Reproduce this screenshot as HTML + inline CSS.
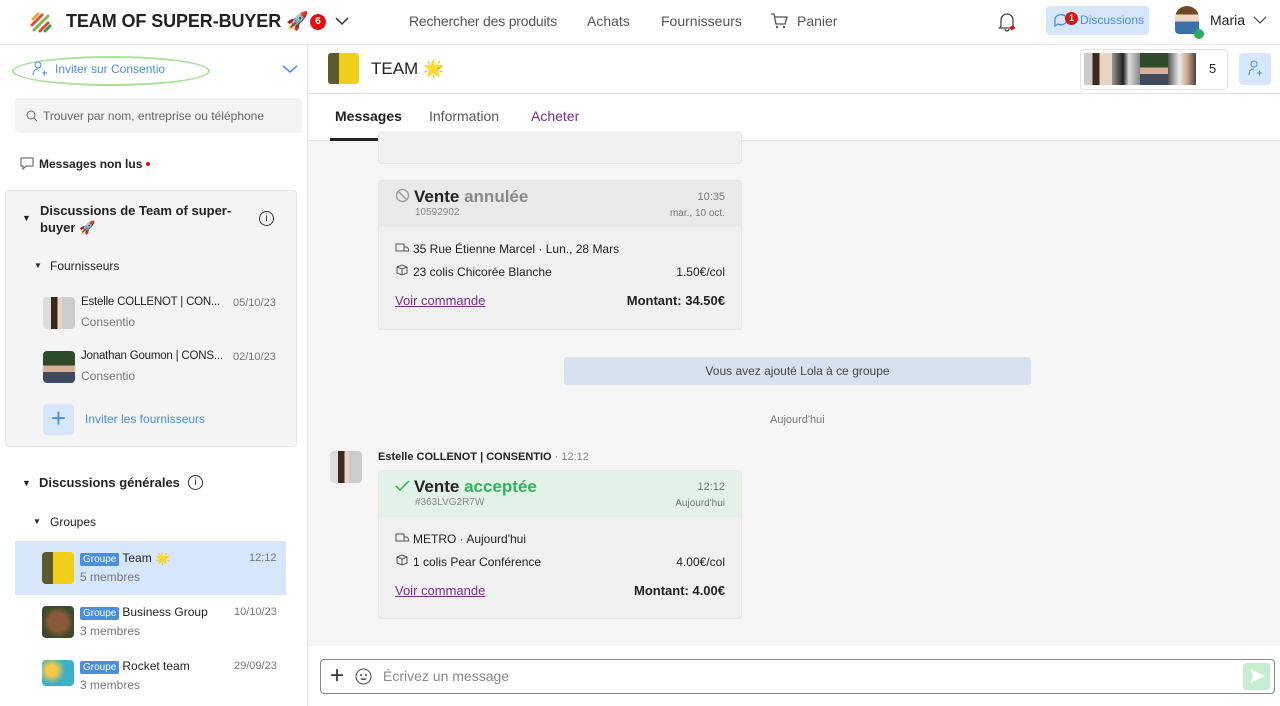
<!DOCTYPE html>
<html><head><meta charset="utf-8"><style>
*{box-sizing:border-box;margin:0;padding:0}
body{width:1280px;height:706px;overflow:hidden;font-family:"Liberation Sans","Noto Sans CJK JP",sans-serif;background:#fff;color:#222;position:relative;font-size:13px}
.a{position:absolute}
.nav{left:0;top:0;width:1280px;height:45px;border-bottom:1px solid #e4e4e4;background:#fff}
.side{left:0;top:45px;width:308px;height:661px;border-right:1px solid #e4e4e4;background:#fff}
.chat{left:308px;top:141px;width:972px;height:505px;background:#f5f5f5}
.card{background:#f0f0f0;border:1px solid #e6e6e6;border-radius:4px;width:364px}
.ch{height:46px;background:#eaeaea;padding:6px 16px 0 16px;position:relative}
.cb{padding:10px 16px;font-size:12px}
.row{display:flex;justify-content:space-between;height:23px;align-items:center}
.link{color:#7b2d8e;text-decoration:underline;font-size:13px}
.av{width:32px;height:32px;border-radius:4px}
.tag{background:#4a8ee0;color:#fff;font-size:10px;padding:1px 3px;border-radius:2px;margin-right:3px}
.g{color:#777}
.nm{font-size:11.5px;letter-spacing:-.2px}
</style></head><body>
<div class="a nav">
 <svg class="a" style="left:28px;top:9px" width="26" height="26" viewBox="0 0 26 26"><g stroke-width="3" stroke-linecap="round"><path d="M5 10l5-5" stroke="#e8a33a"/><path d="M4 16l10-10" stroke="#d94b3a"/><path d="M6 21l14-14" stroke="#7db944"/><path d="M12 22l8-8" stroke="#d94b3a"/><path d="M17 22l5-5" stroke="#2f9e44"/></g></svg>
 <div class="a" style="left:66px;top:11px;font-size:18px;font-weight:bold;letter-spacing:-.1px">TEAM OF SUPER-BUYER 🚀</div>
 <div class="a" style="left:310px;top:14px;width:16px;height:16px;border-radius:8px;background:#d11;color:#fff;font-size:10px;text-align:center;line-height:16px;font-weight:bold">6</div>
 <svg class="a" style="left:334px;top:15px" width="16" height="12"><path d="M2 3l6 6 6-6" stroke="#333" fill="none" stroke-width="1.5"/></svg>
 <div class="a" style="left:409px;top:13px;font-size:14px;color:#555;letter-spacing:-.2px">Rechercher des produits</div>
 <div class="a" style="left:587px;top:13px;font-size:14px;color:#555">Achats</div>
 <div class="a" style="left:661px;top:13px;font-size:14px;color:#555">Fournisseurs</div>
 <svg class="a" style="left:770px;top:12px" width="18" height="18" viewBox="0 0 18 18"><path d="M1 2h3l2 10h9l2-7H5" stroke="#555" fill="none" stroke-width="1.3"/><circle cx="7" cy="15" r="1.2" fill="#555"/><circle cx="14" cy="15" r="1.2" fill="#555"/></svg>
 <div class="a" style="left:797px;top:13px;font-size:14px;color:#555">Panier</div>
 <svg class="a" style="left:998px;top:12px" width="18" height="20" viewBox="0 0 18 20"><path d="M3 14V8a6 6 0 0112 0v6l1.5 2h-15z M7 17a2 2 0 004 0" stroke="#444" fill="none" stroke-width="1.3"/><circle cx="14" cy="16" r="2" fill="#d11"/></svg>
 <div class="a" style="left:1046px;top:6px;width:103px;height:29px;background:#d6e6fb;border-radius:4px"></div>
 <svg class="a" style="left:1052px;top:11px" width="22" height="20"><path d="M3 9a6 5 0 1 1 3 4l-3 2z" stroke="#4a8ee0" fill="none" stroke-width="1.3"/></svg>
 <div class="a" style="left:1065px;top:12px;width:13px;height:13px;border-radius:7px;background:#d11;color:#fff;font-size:9px;text-align:center;line-height:13px;font-weight:bold">1</div>
 <div class="a" style="left:1080px;top:13px;font-size:12px;color:#4a8ee0">Discussions</div>
 <div class="a" style="left:1175px;top:6px;width:24px;height:28px;border-radius:12px 12px 4px 4px;background:linear-gradient(#6b4a2a 30%,#f1d8c0 30%,#f1d8c0 55%,#3a6fa8 55%)"></div>
 <div class="a" style="left:1194px;top:29px;width:10px;height:10px;border-radius:5px;background:#27ae60"></div>
 <div class="a" style="left:1210px;top:12px;font-size:14px">Maria</div>
 <svg class="a" style="left:1253px;top:15px" width="14" height="10"><path d="M1 2l6 6 6-6" stroke="#555" fill="none" stroke-width="1.3"/></svg>
</div>

<div class="a side">
 <div class="a" style="left:12px;top:11px;width:198px;height:30px;border:2.5px solid #a8e29a;border-radius:50%"></div>
 <svg class="a" style="left:32px;top:16px" width="16" height="16" viewBox="0 0 16 16"><circle cx="6" cy="4" r="3" stroke="#4a8ee0" fill="none"/><path d="M1 14c0-4 2-6 5-6M10 12h5M12.5 9.5v5" stroke="#4a8ee0" fill="none"/></svg>
 <div class="a" style="left:55px;top:17px;font-size:12px;color:#4a8ee0">Inviter sur Consentio</div>
 <svg class="a" style="left:282px;top:19px" width="16" height="10"><path d="M1 2l7 6 7-6" stroke="#4a8ee0" fill="none" stroke-width="1.5"/></svg>
 <div class="a" style="left:15px;top:53px;width:287px;height:35px;background:#f3f3f3;border-radius:4px"></div>
 <svg class="a" style="left:26px;top:65px" width="12" height="12"><circle cx="5" cy="5" r="4" stroke="#666" fill="none"/><path d="M8 8l3 3" stroke="#666"/></svg>
 <div class="a" style="left:43px;top:64px;font-size:12px;color:#666">Trouver par nom, entreprise ou téléphone</div>
 <svg class="a" style="left:20px;top:112px" width="14" height="13"><path d="M1 1h12v8H6l-3 3V9H1z" stroke="#555" fill="none"/></svg>
 <div class="a" style="left:39px;top:112px;font-size:12px;font-weight:bold">Messages non lus</div>
 <div class="a" style="left:146px;top:117px;width:4px;height:4px;border-radius:2px;background:#d11"></div>
 <div class="a" style="left:5px;top:145px;width:292px;height:257px;background:#f4f4f4;border:1px solid #e4e4e4;border-radius:4px"></div>
 <div class="a" style="left:22px;top:168px;font-size:9px">▼</div>
 <div class="a" style="left:40px;top:157px;font-size:13px;font-weight:bold;line-height:17px;width:200px">Discussions de Team of super-buyer 🚀</div>
 <div class="a" style="left:259px;top:166px;width:15px;height:15px;border:1px solid #333;border-radius:8px;font-size:10px;text-align:center;line-height:13px">i</div>
 <div class="a" style="left:34px;top:216px;font-size:8px">▼</div>
 <div class="a" style="left:50px;top:214px;font-size:12px">Fournisseurs</div>
 <div class="a av" style="left:43px;top:252px;background:linear-gradient(90deg,#ddd 25%,#3a2a20 25%,#3a2a20 45%,#e9d4c4 45%,#e9d4c4 60%,#ccc 60%)"></div>
 <div class="a nm" style="left:81px;top:251px">Estelle COLLENOT | CON...</div>
 <div class="a g" style="left:233px;top:252px;font-size:11px">05/10/23</div>
 <div class="a g" style="left:81px;top:270px;font-size:12px">Consentio</div>
 <div class="a av" style="left:43px;top:306px;background:linear-gradient(#2d4a2a 45%,#d8b09a 45%,#d8b09a 65%,#3e4a60 65%)"></div>
 <div class="a nm" style="left:81px;top:305px">Jonathan Goumon | CONS...</div>
 <div class="a g" style="left:233px;top:306px;font-size:11px">02/10/23</div>
 <div class="a g" style="left:81px;top:324px;font-size:12px">Consentio</div>
 <div class="a" style="left:43px;top:359px;width:31px;height:31px;background:#d6e6fb;border-radius:4px;color:#4a8ee0;font-size:26px;text-align:center;line-height:29px">+</div>
 <div class="a" style="left:85px;top:367px;font-size:12px;color:#4a8ee0">Inviter les fournisseurs</div>
 <div class="a" style="left:22px;top:433px;font-size:9px">▼</div>
 <div class="a" style="left:39px;top:430px;font-size:13px;font-weight:bold">Discussions générales</div>
 <div class="a" style="left:188px;top:430px;width:15px;height:15px;border:1px solid #333;border-radius:8px;font-size:10px;text-align:center;line-height:13px">i</div>
 <div class="a" style="left:33px;top:472px;font-size:8px">▼</div>
 <div class="a" style="left:50px;top:470px;font-size:12px">Groupes</div>
 <div class="a" style="left:15px;top:496px;width:271px;height:54px;background:#d6e6fb"></div>
 <div class="a av" style="left:42px;top:507px;background:linear-gradient(90deg,#5a5a2a 35%,#f0cf1a 35%)"></div>
 <div class="a" style="left:80px;top:506px;font-size:12px"><span class="tag">Groupe</span>Team 🌟</div>
 <div class="a g" style="left:249px;top:507px;font-size:11px">12:12</div>
 <div class="a g" style="left:80px;top:525px;font-size:12px">5 membres</div>
 <div class="a av" style="left:42px;top:561px;background:radial-gradient(#8a5a3a 40%,#3a4a2a 70%)"></div>
 <div class="a" style="left:80px;top:560px;font-size:12px"><span class="tag">Groupe</span>Business Group</div>
 <div class="a g" style="left:234px;top:561px;font-size:11px">10/10/23</div>
 <div class="a g" style="left:80px;top:579px;font-size:12px">3 membres</div>
 <div class="a av" style="left:42px;top:615px;height:26px;background:radial-gradient(circle at 30% 40%,#f5c84a 20%,#3ab0c8 50%)"></div>
 <div class="a" style="left:80px;top:614px;font-size:12px"><span class="tag">Groupe</span>Rocket team</div>
 <div class="a g" style="left:234px;top:615px;font-size:11px">29/09/23</div>
 <div class="a g" style="left:80px;top:633px;font-size:12px">3 membres</div>
</div>

<div class="a" style="left:308px;top:45px;width:972px;height:49px;border-bottom:1px solid #e4e4e4"></div>
<div class="a" style="left:328px;top:53px;width:31px;height:31px;border-radius:3px;background:linear-gradient(90deg,#5a5a2a 35%,#f0cf1a 35%)"></div>
<div class="a" style="left:371px;top:59px;font-size:17px">TEAM 🌟</div>
<div class="a" style="left:1080px;top:49px;width:148px;height:41px;border:1px solid #e4e4e4;border-radius:4px"></div>
<div class="a" style="left:1084px;top:53px;width:28px;height:32px;background:linear-gradient(90deg,#ccc 30%,#3a2a20 30%,#3a2a20 55%,#e9d4c4 55%)"></div>
<div class="a" style="left:1112px;top:53px;width:28px;height:32px;background:linear-gradient(90deg,#999,#222 40%,#ddd 60%,#888)"></div>
<div class="a" style="left:1140px;top:53px;width:28px;height:32px;background:linear-gradient(#2d4a2a 45%,#d8b09a 45%,#d8b09a 65%,#3e4a60 65%)"></div>
<div class="a" style="left:1168px;top:53px;width:28px;height:32px;background:linear-gradient(90deg,#555,#eee 40%,#c9a080 70%,#444)"></div>
<div class="a" style="left:1209px;top:61px;font-size:13px">5</div>
<div class="a" style="left:1239px;top:53px;width:32px;height:32px;background:#d6e6fb;border-radius:4px"></div>
<svg class="a" style="left:1247px;top:60px" width="16" height="17" viewBox="0 0 16 17"><circle cx="7" cy="4" r="3" stroke="#4a8ee0" fill="none"/><path d="M2 15c0-4 2-6 5-6M10 13h5M12.5 10.5v5" stroke="#4a8ee0" fill="none"/></svg>
<div class="a" style="left:308px;top:94px;width:972px;height:47px;border-bottom:1px solid #e4e4e4"></div>
<div class="a" style="left:335px;top:108px;font-size:14px;font-weight:bold">Messages</div>
<div class="a" style="left:330px;top:138px;width:72px;height:3px;background:#222"></div>
<div class="a" style="left:429px;top:108px;font-size:14px;color:#555">Information</div>
<div class="a" style="left:531px;top:108px;font-size:14px;color:#7b2d8e">Acheter</div>

<div class="a chat">
 <div class="a card" style="left:70px;top:-10px;height:33px;border-top:none"></div>
 <div class="a card" style="left:70px;top:39px;height:150px">
  <div class="ch"><div style="font-size:17px;font-weight:bold"><svg width="15" height="15" style="vertical-align:-1px;margin-right:4px"><circle cx="7.5" cy="7.5" r="6" stroke="#999" fill="none" stroke-width="1.3"/><path d="M3.5 3.5l8 8" stroke="#999" stroke-width="1.3"/></svg>Vente <span style="color:#888">annulée</span></div>
   <div style="font-size:10px;color:#888;margin-left:20px">10592902</div>
   <div class="a g" style="right:16px;top:10px;font-size:11px">10:35</div>
   <div class="a g" style="right:16px;top:27px;font-size:10px">mar., 10 oct.</div></div>
  <div class="cb"><div class="row"><span><svg width="14" height="10" style="margin-right:4px"><path d="M1 1h8v7H1zM9 4h3l1.5 2v2H9" stroke="#555" fill="none"/></svg>35 Rue Étienne Marcel · Lun., 28 Mars</span></div><div class="row"><span><svg width="14" height="12" style="margin-right:4px"><path d="M2 3l5-2 5 2v6l-5 2-5-2zM2 3l5 2 5-2M7 5v6" stroke="#555" fill="none"/></svg>23 colis Chicorée Blanche</span><span>1.50€/col</span></div>
  <div class="row" style="height:35px"><span class="link">Voir commande</span><span style="font-size:13px;font-weight:bold">Montant: 34.50€</span></div></div>
 </div>
 <div class="a" style="left:256px;top:216px;width:467px;height:28px;background:#d6e2f0;border-radius:3px;text-align:center;line-height:28px;font-size:12px;color:#444">Vous avez ajouté Lola à ce groupe</div>
 <div class="a g" style="left:462px;top:273px;font-size:11px">Aujourd'hui</div>
 <div class="a av" style="left:22px;top:310px;background:linear-gradient(90deg,#ddd 25%,#3a2a20 25%,#3a2a20 45%,#e9d4c4 45%,#e9d4c4 60%,#ccc 60%)"></div>
 <div class="a" style="left:70px;top:310px;font-size:11px;font-weight:bold">Estelle COLLENOT | CONSENTIO <span style="font-weight:normal;color:#888">· 12:12</span></div>
 <div class="a card" style="left:70px;top:329px;height:149px">
  <div class="ch" style="background:#e3f2e6"><div style="font-size:17px;font-weight:bold"><svg width="15" height="13" style="margin-right:4px"><path d="M1 7l4 4 9-9" stroke="#27ae60" fill="none" stroke-width="1.5"/></svg>Vente <span style="color:#2fb55a">acceptée</span></div>
   <div style="font-size:10px;color:#888;margin-left:20px">#363LVG2R7W</div>
   <div class="a g" style="right:16px;top:10px;font-size:11px">12:12</div>
   <div class="a g" style="right:16px;top:27px;font-size:10px">Aujourd'hui</div></div>
  <div class="cb"><div class="row"><span><svg width="14" height="10" style="margin-right:4px"><path d="M1 1h8v7H1zM9 4h3l1.5 2v2H9" stroke="#555" fill="none"/></svg>METRO · Aujourd'hui</span></div><div class="row"><span><svg width="14" height="12" style="margin-right:4px"><path d="M2 3l5-2 5 2v6l-5 2-5-2zM2 3l5 2 5-2M7 5v6" stroke="#555" fill="none"/></svg>1 colis Pear Conférence</span><span>4.00€/col</span></div>
  <div class="row" style="height:35px"><span class="link">Voir commande</span><span style="font-size:13px;font-weight:bold">Montant: 4.00€</span></div></div>
 </div>
</div>
<div class="a" style="left:320px;top:659px;width:955px;height:35px;border:1px solid #888;border-radius:4px"></div>
<div class="a" style="left:330px;top:662px;font-size:24px;font-weight:300;color:#333">+</div>
<svg class="a" style="left:355px;top:668px" width="17" height="17"><circle cx="8.5" cy="8.5" r="7.5" stroke="#444" fill="none"/><circle cx="6" cy="7" r="1" fill="#444"/><circle cx="11" cy="7" r="1" fill="#444"/><path d="M5 10.5a4 3 0 007 0z" fill="#444"/></svg>
<div class="a" style="left:383px;top:668px;font-size:14px;color:#888">Écrivez un message</div>
<div class="a" style="left:1243px;top:663px;width:27px;height:27px;background:#c7ecd2;border-radius:3px"></div>
<svg class="a" style="left:1248px;top:667px" width="18" height="18"><path d="M2 2l15 7-15 7 3-7z" fill="#fff"/></svg>
</body></html>
